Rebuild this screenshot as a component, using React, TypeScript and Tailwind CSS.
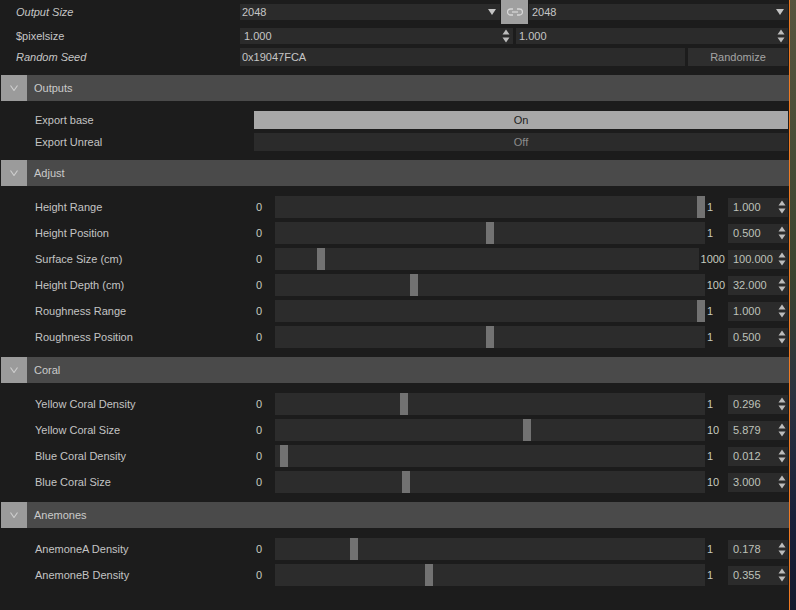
type Slider = { label: string; max: number; value: number };

const adjust: Slider[] = [
  { label: 'Height Range', max: 1, value: 1 },
  { label: 'Height Position', max: 1, value: 0.5 },
  { label: 'Surface Size (cm)', max: 1000, value: 100 },
  { label: 'Height Depth (cm)', max: 100, value: 32 },
  { label: 'Roughness Range', max: 1, value: 1 },
  { label: 'Roughness Position', max: 1, value: 0.5 },
];

const coral: Slider[] = [
  { label: 'Yellow Coral Density', max: 1, value: 0.296 },
  { label: 'Yellow Coral Size', max: 10, value: 5.879 },
  { label: 'Blue Coral Density', max: 1, value: 0.012 },
  { label: 'Blue Coral Size', max: 10, value: 3 },
];

const anemones: Slider[] = [
  { label: 'AnemoneA Density', max: 1, value: 0.178 },
  { label: 'AnemoneB Density', max: 1, value: 0.355 },
];

function Spin() {
  return (
    <svg width="8" height="14" viewBox="0 0 8 14" className="shrink-0">
      <path d="M4 0.5L7.5 5.5H0.5Z M0.5 8.5H7.5L4 13.5Z" fill="#bcbcbc" />
    </svg>
  );
}

function DropArrow() {
  return (
    <svg width="8" height="6" viewBox="0 0 8 6" className="shrink-0">
      <path d="M0 0H8L4 6Z" fill="#c4c4c4" />
    </svg>
  );
}

function LinkIcon() {
  return (
    <svg width="16" height="8" viewBox="0 0 16 8" fill="none" stroke="#d6d6d6" strokeWidth="1.3">
      <path d="M6 1H3.5a3 3 0 0 0 0 6H6" />
      <path d="M10 1h2.5a3 3 0 0 1 0 6H10" />
      <path d="M5 4h6" />
    </svg>
  );
}

function Chevron() {
  return (
    <svg width="8" height="6" viewBox="0 0 8 6" fill="none" stroke="#cfcfcf" strokeWidth="1.1">
      <path d="M0.5 0.5L4 5.5L7.5 0.5" />
    </svg>
  );
}

function Header({ title }: { title: string }) {
  return (
    <div className="flex h-[26px] items-stretch pl-[1px]">
      <div className="flex w-[26px] items-center justify-center bg-[#9b9b9b]">
        <Chevron />
      </div>
      <div className="flex flex-1 items-center bg-[#4a4a4a] pl-[7px] text-[#cacaca]">{title}</div>
    </div>
  );
}

function SliderRow({ label, max, value }: Slider) {
  const frac = value / max;
  return (
    <div className="flex h-[22px] items-center">
      <div className="w-[254px] shrink-0 pl-[35px] text-[#c4c4c4]">{label}</div>
      <div className="w-[21px] shrink-0 pl-[2px] text-[#c6cabf]">0</div>
      <div className="relative h-full flex-1 bg-[#2c2c2c]">
        <div
          className="absolute top-0 h-full w-[8px] bg-[#727272]"
          style={{ left: `calc(${frac} * (100% - 8px))` }}
        />
      </div>
      <div className="min-w-[23px] shrink-0 pl-[2px] pr-[3px] text-[#c6cabf]">{max}</div>
      <div className="flex h-[19px] w-[60px] shrink-0 items-center justify-between bg-[#2b2b2b] pl-[5px] pr-[2px] text-[#bfc2ba]">
        <span>{value.toFixed(3)}</span>
        <Spin />
      </div>
    </div>
  );
}

function Section({ title, children }: { title: string; children: React.ReactNode }) {
  return (
    <div>
      <Header title={title} />
      <div className="flex flex-col gap-[4px] pb-[9px] pr-[1px] pt-[10px]">{children}</div>
    </div>
  );
}

export default function App() {
  return (
    <div className="flex h-[610px] w-[796px] overflow-hidden bg-[#1c1c1c] font-['Liberation_Sans',Arial,sans-serif] text-[11px] leading-none">
      <div className="flex w-[789px] shrink-0 flex-col">
        {/* top parameters */}
        <div className="flex flex-col pb-[9px] pr-[1px]">
          <div className="flex h-[24px] items-center">
            <div className="w-[240px] shrink-0 pl-[16px] italic text-[#c6c6c6]">Output Size</div>
            <div className="flex h-[16px] w-[260px] items-center justify-between bg-[#2b2b2b] pl-[2px] pr-[4px] text-[#c6c6c6]">
              <span>2048</span>
              <DropArrow />
            </div>
            <div className="ml-[1px] flex h-full w-[27px] items-center justify-center bg-[#a0a0a0]">
              <LinkIcon />
            </div>
            <div className="ml-[1px] flex h-[16px] flex-1 items-center justify-between bg-[#2b2b2b] pl-[3px] pr-[4px] text-[#c6c6c6]">
              <span>2048</span>
              <DropArrow />
            </div>
          </div>
          <div className="flex h-[24px] items-center">
            <div className="w-[240px] shrink-0 pl-[16px] text-[#c6c6c6]">$pixelsize</div>
            <div className="flex h-[16px] w-[273px] items-center justify-between bg-[#2b2b2b] pl-[4px] pr-[3px] text-[#c6c6c6]">
              <span>1.000</span>
              <Spin />
            </div>
            <div className="ml-[3px] flex h-[16px] flex-1 items-center justify-between bg-[#2b2b2b] pl-[3px] pr-[3px] text-[#c6c6c6]">
              <span>1.000</span>
              <Spin />
            </div>
          </div>
          <div className="flex h-[18px] items-center">
            <div className="w-[240px] shrink-0 pl-[16px] italic text-[#c6c6c6]">Random Seed</div>
            <div className="flex h-full w-[445px] items-center bg-[#2b2b2b] pl-[2px] text-[#c6c6c6]">0x19047FCA</div>
            <div className="ml-[3px] flex h-full flex-1 items-center justify-center bg-[#2e2e2e] text-[#a4a4a4]">
              Randomize
            </div>
          </div>
        </div>

        <Section title="Outputs">
          <div className="flex h-[18px] items-center">
            <div className="w-[254px] shrink-0 pl-[35px] text-[#c4c4c4]">Export base</div>
            <div className="flex h-full flex-1 items-center justify-center bg-[#a8a8a8] text-[#1e1e1e]">On</div>
          </div>
          <div className="flex h-[18px] items-center">
            <div className="w-[254px] shrink-0 pl-[35px] text-[#c4c4c4]">Export Unreal</div>
            <div className="flex h-full flex-1 items-center justify-center bg-[#2b2b2b] text-[#8c8c8c]">Off</div>
          </div>
        </Section>

        <Section title="Adjust">
          {adjust.map((s) => (
            <SliderRow key={s.label} {...s} />
          ))}
        </Section>

        <Section title="Coral">
          {coral.map((s) => (
            <SliderRow key={s.label} {...s} />
          ))}
        </Section>

        <Section title="Anemones">
          {anemones.map((s) => (
            <SliderRow key={s.label} {...s} />
          ))}
        </Section>
      </div>
      <div className="w-[1px] shrink-0 bg-[#f07a22]" />
      <div className="flex-1 bg-[linear-gradient(180deg,#55553f_0%,#4a4e38_20%,#3a4430_45%,#2a3240_65%,#18203a_85%,#141a2e_100%)]" />
    </div>
  );
}
